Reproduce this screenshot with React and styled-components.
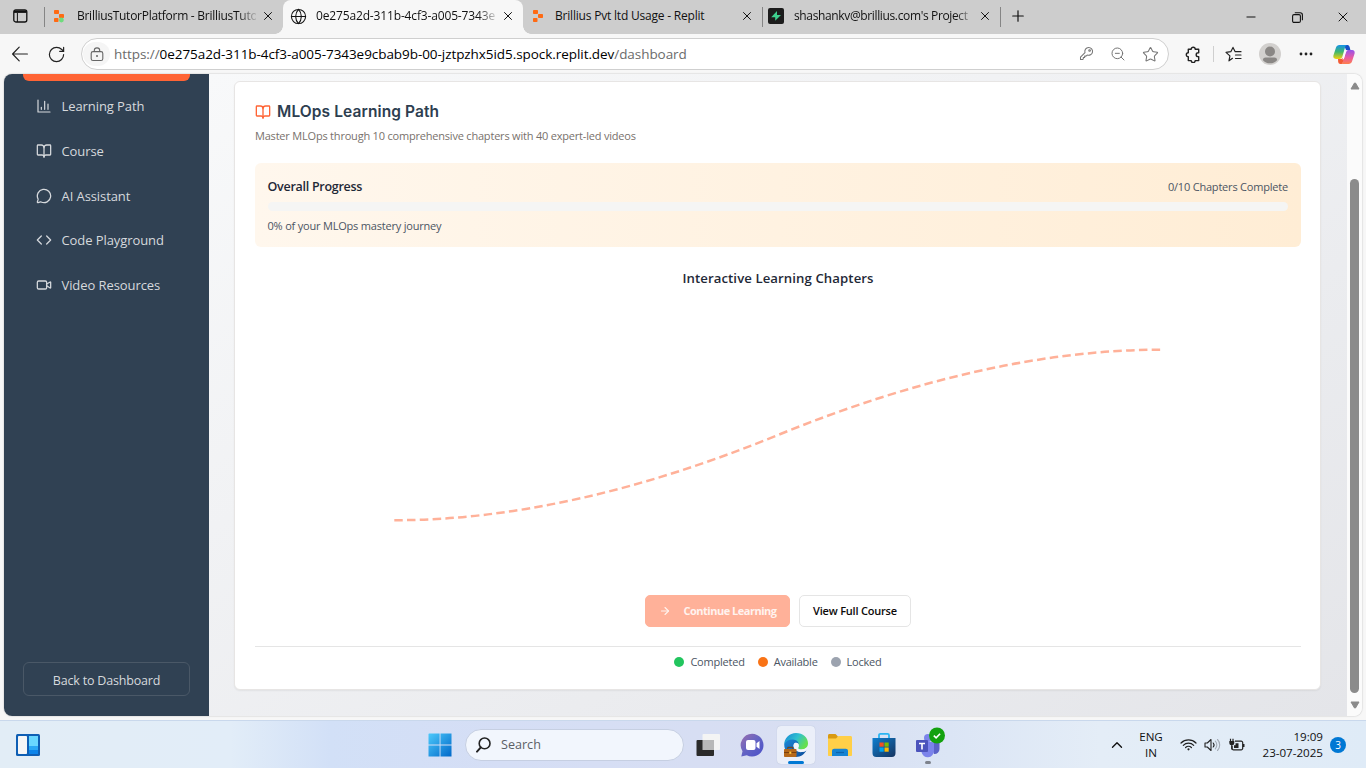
import React from 'react';
import styled, { createGlobalStyle } from 'styled-components';
import {
  BookOpen, MessageCircle, Code, Video, ArrowRight, Globe, Plus, X, Minus,
  RotateCw, ZoomOut, Star, ChevronUp,
} from 'lucide-react';

const Global = createGlobalStyle`
  * { box-sizing: border-box; }
  body { margin: 0; overflow: hidden; background: #f7f7f7; }
  svg { display: block; flex: none; }
`;

const ui = `'Open Sans', 'Noto Sans', sans-serif`;

const Screen = styled.div`
  width: 1366px;
  height: 768px;
  display: flex;
  flex-direction: column;
  background: #f7f7f7;
  font-family: ${ui};
  color: #111;
`;

const Text = styled.span`
  display: block;
  font-size: ${p => p.$size}px;
  font-weight: ${p => p.$weight || 400};
  color: ${p => p.$color || 'inherit'};
  letter-spacing: ${p => p.$track || 0}px;
  line-height: ${p => p.$line || 18}px;
  white-space: nowrap;
`;

/* ---- tab strip ---- */
const TabStrip = styled.header`
  height: 34px;
  flex: none;
  display: flex;
  background: #cdcdcd;
`;
const TabActions = styled.div`
  width: 44px;
  display: flex;
  align-items: center;
  padding: 0 0 2px 13px;
`;
const Tab = styled.div`
  position: relative;
  width: ${p => p.$width}px;
  height: 34px;
  display: flex;
  align-items: center;
  padding: 0 8px 2px ${p => p.$pad}px;
  background: ${p => (p.$active ? '#f7f7f7' : 'transparent')};
  border-radius: 8px 8px 0 0;
  ${p => p.$active && `
    &::before, &::after {
      content: '';
      position: absolute;
      bottom: 0;
      width: 8px;
      height: 8px;
    }
    &::before { left: -8px; background: radial-gradient(circle at 0 0, #cdcdcd 7.5px, #f7f7f7 8px); }
    &::after { right: -8px; background: radial-gradient(circle at 100% 0, #cdcdcd 7.5px, #f7f7f7 8px); }
  `}
`;
const TabTitle = styled.span`
  flex: 1;
  min-width: 0;
  margin-left: ${p => p.$gap}px;
  margin-right: 5px;
  overflow: hidden;
  white-space: nowrap;
  font-size: 12px;
  line-height: 18px;
  letter-spacing: ${p => p.$track}px;
  ${p => p.$fade && 'mask-image: linear-gradient(to right, #000 calc(100% - 18px), rgba(0, 0, 0, 0.15));'}
`;
const TabDivider = styled.i`
  width: 1px;
  height: 20px;
  margin: 7px -1px 0 0;
  background: #858585;
`;
const NewTab = styled.div`
  width: 36px;
  display: flex;
  align-items: center;
  justify-content: center;
  padding-bottom: 2px;
`;
const WindowButtons = styled.div`
  margin-left: auto;
  display: flex;
  align-items: center;
`;
const WindowButton = styled.div`
  width: 46px;
  display: flex;
  justify-content: center;
`;

/* ---- toolbar ---- */
const Toolbar = styled.div`
  height: 39px;
  flex: none;
  display: flex;
  align-items: center;
  padding: 1px 10px 0 11px;
`;
const Refresh = styled.div`
  margin: 0 15px 0 19px;
  color: #222;
`;
const AddressBar = styled.div`
  width: 1088px;
  height: 32px;
  display: flex;
  align-items: center;
  padding: 0 9px 0 1px;
  background: #fff;
  border: 1px solid #cfcfcf;
  border-radius: 16px;
`;
const LockBadge = styled.div`
  width: 27px;
  height: 24px;
  display: flex;
  align-items: center;
  justify-content: center;
  background: #f5f5f5;
  border-radius: 12px;
  margin-right: 4px;
`;
const Url = styled.div`
  flex: 1;
  font-size: 13.5px;
  letter-spacing: -0.06px;
  line-height: 20px;
  color: #6b6b6b;
  white-space: nowrap;
  b { font-weight: 400; color: #000; }
`;
const AddressIcons = styled.div`
  display: flex;
  gap: 16px;
  color: #757575;
`;
const ToolItem = styled.div`
  margin-left: ${p => p.$gap}px;
`;
const ToolbarDivider = styled.i`
  width: 1px;
  height: 16px;
  margin-left: 12px;
  background: #cfcfcf;
`;

/* ---- page ---- */
const Viewport = styled.div`
  height: 642px;
  flex: none;
  margin: 1px 4px 0 4px;
  display: flex;
  border-radius: 8px;
  overflow: hidden;
  background: #fbfbfb;
  box-shadow: 0 0 1.5px rgba(0, 0, 0, 0.35);
`;
const Sidebar = styled.aside`
  width: 205px;
  flex: none;
  display: flex;
  flex-direction: column;
  padding: 0 19px 20px;
  background: #304153;
  color: #d6d9dd;
`;
const ActiveItem = styled.div`
  height: 7px;
  flex: none;
  background: #ff6435;
  border-radius: 0 0 6px 6px;
  margin-bottom: 3px;
`;
const NavItem = styled.div`
  height: 44.65px;
  display: flex;
  align-items: center;
  gap: 9.5px;
  padding-left: 13px;
`;
const BackButton = styled.div`
  height: 34px;
  margin-top: auto;
  display: flex;
  align-items: center;
  justify-content: center;
  padding-top: 3px;
  border: 1px solid #4a5867;
  border-radius: 6px;
`;
const Main = styled.main`
  flex: 1;
  padding: 7px 26px 0 25px;
  background: linear-gradient(150deg, #f8f9fa 0%, #e4e5e9 100%);
`;
const Scrollbar = styled.div`
  width: 15px;
  display: flex;
  flex-direction: column;
  align-items: center;
  padding: 8px 0 7px;
  background: #fbfbfb;
`;
const Thumb = styled.div`
  width: 9px;
  height: 514px;
  margin-top: 89px;
  margin-bottom: auto;
  border-radius: 5px;
  background: #8b8b8b;
`;
const Card = styled.section`
  height: 609px;
  padding: 19px 19px 0 20px;
  background: #fff;
  border: 1px solid #e7e5e4;
  border-radius: 6px;
  box-shadow: 0 1px 2px rgba(0, 0, 0, 0.06);
`;
const CardTitle = styled.h1`
  height: 22px;
  margin: 0;
  display: flex;
  align-items: center;
  gap: 6px;
  font: 600 15.5px/22px Inter, sans-serif;
  letter-spacing: 0.1px;
  color: #2d3e50;
`;
const Subtitle = styled.div`
  margin: 4px 0 18px;
  height: 18px;
`;
const ProgressBox = styled.div`
  height: 84px;
  padding: 14.5px 13px 0 12.5px;
  border-radius: 6px;
  background: linear-gradient(to right, #fff7ed, #ffedd5);
`;
const ProgressHead = styled.div`
  display: flex;
  justify-content: space-between;
`;
const Track = styled.div`
  height: 9px;
  margin: 6.5px 0 6px;
  border-radius: 5px;
  background: #f5f5f4;
`;
const SectionTitle = styled.div`
  margin-top: 22px;
  height: 18px;
  display: flex;
  justify-content: center;
`;
const PathChart = styled.div`
  height: 308px;
  display: flex;
`;
const Actions = styled.div`
  display: flex;
  justify-content: center;
  gap: 9px;
`;
const Button = styled.div`
  width: ${p => p.$width}px;
  height: 32px;
  display: flex;
  align-items: center;
  justify-content: center;
  gap: 13px;
  border-radius: 5px;
  border: 1px solid ${p => (p.$primary ? '#ffb199' : '#e5e5e5')};
  background: ${p => (p.$primary ? '#ffb199' : '#fff')};
  color: ${p => (p.$primary ? '#fff3ef' : '#0c0a09')};
`;
const Legend = styled.div`
  margin-top: 19px;
  padding-top: 6px;
  border-top: 1px solid #e5e5e5;
  display: flex;
  justify-content: center;
  gap: 13px;
`;
const LegendItem = styled.div`
  display: flex;
  align-items: center;
  gap: 6px;
`;
const Dot = styled.i`
  width: 10px;
  height: 10px;
  border-radius: 50%;
  background: ${p => p.$color};
`;

/* ---- taskbar ---- */
const Taskbar = styled.footer`
  height: 48px;
  margin-top: auto;
  display: flex;
  align-items: center;
  border-top: 1px solid #c9d8ec;
  background: linear-gradient(to right, #e2edf6 0, #e2edf8 230px, #d2e0f7 330px, #d5def5 500px, #d8def2 800px, #dbe5f5 950px, #e4edf7 1100px, #dfebf7 1366px);
`;
const Widgets = styled.div`
  width: 428px;
  padding-left: 16px;
`;
const SearchBox = styled.div`
  width: 219px;
  height: 32px;
  margin: 0 5px 0 12.5px;
  display: flex;
  align-items: center;
  gap: 10px;
  padding-left: 10.5px;
  border: 1px solid #c6cfe2;
  border-radius: 16px;
  background: #f2f6fd;
`;
const TaskButton = styled.div`
  position: relative;
  width: 38px;
  height: 38px;
  margin-right: 6px;
  display: flex;
  align-items: center;
  justify-content: center;
  border-radius: 4px;
  background: ${p => (p.$active ? '#ebeff9' : 'transparent')};
  box-shadow: ${p => (p.$active ? '0 0 1px #a9b4cc' : 'none')};
`;
const RunningMark = styled.i`
  position: absolute;
  bottom: 0;
  left: ${p => 19 - p.$width / 2}px;
  width: ${p => p.$width}px;
  height: 3px;
  border-radius: 2px;
  background: ${p => p.$color};
`;
const Tray = styled.div`
  margin-left: auto;
  display: flex;
  align-items: center;
  padding-right: 20px;
`;
const Stack = styled.div`
  display: flex;
  flex-direction: column;
  align-items: ${p => p.$align};
  width: ${p => p.$width}px;
`;
const TrayIcons = styled.div`
  display: flex;
  align-items: center;
  gap: 7px;
  margin-left: 4px;
`;
const Badge = styled.div`
  width: 16px;
  height: 16px;
  margin-left: 7px;
  display: flex;
  align-items: center;
  justify-content: center;
  border-radius: 50%;
  background: #0078d4;
`;

const Close = () => <X size={14} strokeWidth={1.7} />;

const ReplitMark = ({ green }) => (
  <svg width="12" height="14" viewBox="0 0 12 14">
    <rect x="1" y="1" width="5" height="4" rx="0.8" fill="#ff6a13" />
    <rect x="6" y="5" width="5" height="4" rx="0.8" fill="#ff6a13" />
    <rect x="1" y="9" width="4.5" height="4" rx="0.8" fill="#ff6a13" />
    {green && <circle cx="8.4" cy="11" r="2.4" fill="#6edb7d" />}
  </svg>
);

const TabPane = () => (
  <svg width="15" height="14" viewBox="0 0 15 14" fill="none" stroke="#111" strokeWidth="1.3">
    <rect x="0.8" y="0.8" width="13" height="12.2" rx="2" />
    <path d="M1 2.6h12.6" strokeWidth="2.6" />
    <path d="M4.4 4v9" strokeWidth="1" />
  </svg>
);

const SupabaseMark = () => (
  <svg width="16" height="16" viewBox="0 0 16 16">
    <rect width="16" height="16" rx="2" fill="#1c1c1c" />
    <path d="M9 3v4h4L7.2 12.8V9.2H3.2z" fill="#3ecf8e" />
  </svg>
);

const Lock = () => (
  <svg width="14" height="15" viewBox="0 0 14 15" fill="none" stroke="#666" strokeWidth="1.1">
    <rect x="1.2" y="4.6" width="11.6" height="8.9" rx="1.8" />
    <path d="M4.3 4.6V3.6a2.7 2.7 0 0 1 5.4 0v1" />
    <circle cx="7" cy="9" r="1" fill="#666" stroke="none" />
  </svg>
);

const BackArrow = () => (
  <svg width="17" height="16" viewBox="0 0 17 16" fill="none" stroke="#222" strokeWidth="1.2" strokeLinecap="round" strokeLinejoin="round">
    <path d="M16.4 8H1.6M8.2 1.2 1.6 8l6.6 6.8" />
  </svg>
);

const Key = () => (
  <svg width="15" height="15" viewBox="0 0 16 16" fill="none" stroke="currentColor" strokeWidth="1.1" strokeLinejoin="round">
    <path d="M10.2 1.5a4.2 4.2 0 1 1-1.5 8.1l-1.2 1.2H6v1.5H4.6v1.4l-.8.8H1.6v-2.7l4.8-4.8a4.2 4.2 0 0 1 3.8-5.5z" />
    <circle cx="11.3" cy="4.8" r="0.9" />
  </svg>
);

const Extensions = () => (
  <svg width="16" height="17" viewBox="0 0 16 17" fill="none" stroke="#222" strokeWidth="1.4" strokeLinejoin="round">
    <path d="M3.3 3.2h2.9a2 2 0 0 1 4 0h3.5v3.6h-.6a1.9 1.9 0 0 0 0 3.8h.6v4H10.2a2 2 0 0 1-4 0H3.3v-3.8a2 2 0 0 1 0-4z" />
  </svg>
);

const FavoritesList = () => (
  <svg width="17" height="17" viewBox="0 0 17 17" fill="none" stroke="#222" strokeWidth="1.2" strokeLinejoin="round" strokeLinecap="round">
    <path d="M7.5 12.3 4 14.8l.9-4.9L1 6.4l4.8-.7L8 1.4l2.2 4.3H16M10.5 9H16M10.5 12.5H16" />
  </svg>
);

const Avatar = () => (
  <svg width="22" height="22" viewBox="0 0 22 22">
    <circle cx="11" cy="11" r="11" fill="#d2d0ce" />
    <circle cx="11" cy="8.5" r="5" fill="#8a8785" />
    <path d="M3.8 17a2.800 2.800 0 0 1 2.800-2.400h8.800a2.800 2.800 0 0 1 2.800 2.400 9.400 9.400 0 0 1-14.400 0z" fill="#8a8785" />
  </svg>
);

const Dots = () => (
  <svg width="14" height="4" viewBox="0 0 14 4" fill="#222">
    <circle cx="2" cy="2" r="1.4" /><circle cx="7" cy="2" r="1.4" /><circle cx="12" cy="2" r="1.4" />
  </svg>
);

const Copilot = () => (
  <svg width="22" height="21" viewBox="0 0 22 21">
    <defs>
      <linearGradient id="cpA" x1="0" y1="0" x2="0" y2="1">
        <stop offset="0" stopColor="#1593e8" /><stop offset=".5" stopColor="#40b76b" /><stop offset="1" stopColor="#f5d10c" />
      </linearGradient>
      <linearGradient id="cpB" x1="0" y1="0" x2="0" y2="1">
        <stop offset="0" stopColor="#9552ed" /><stop offset=".55" stopColor="#e95ba2" /><stop offset="1" stopColor="#ff7f4c" />
      </linearGradient>
    </defs>
    <path d="M11 1h3.6c1.2 0 1.7 1 2 2l.8 3H13z" fill="#1450c8" />
    <path d="M6.5 1H14c-1.2.4-1.7 1.5-2 2.6l-2.6 9C9 14 8 15 6.6 15H3C.8 15 0 13.4.4 11.6L3 3.4C3.5 2 4.7 1 6.5 1z" fill="url(#cpA)" />
    <path d="M5 15h3c1.5 0 2-1 2.4-2.4l.6 4L9 20H7.5c-1.5 0-2-1-2.3-2z" fill="#f25b35" />
    <path d="M15.5 20H8c1.2-.4 1.7-1.5 2-2.6l2.6-9C13 7 14 6 15.4 6H19c2.2 0 3 1.6 2.6 3.4L19 17.6c-.5 1.400-1.700 2.400-3.500 2.400z" fill="url(#cpB)" />
    <path d="M12.600 7.200h1.200c-.7.500-1 1.200-1.200 2l-1.400 4.800c-.3 1-.9 1.700-1.800 1.800l.9-3z" fill="#fff" />
  </svg>
);

const Chart = () => (
  <svg width="16" height="16" viewBox="0 0 24 24" fill="none" stroke="currentColor" strokeWidth="1.8" strokeLinecap="round" strokeLinejoin="round">
    <path d="M3 3v18h18M18 17V9M13 17V5M8 17v-3" />
  </svg>
);

const Restore = () => (
  <svg width="11" height="11" viewBox="0 0 11 11" fill="none" stroke="#111" strokeWidth="1.1">
    <rect x="0.6" y="2.6" width="7.8" height="7.8" rx="1.4" />
    <path d="M2.8.7h5.4a2.2 2.2 0 0 1 2.2 2.2v5.4" />
  </svg>
);

const ArrowTip = ({ down }) => (
  <svg width="10" height="8" viewBox="0 0 10 8">
    <path d={down ? 'M1 1h8L5.5 7h-1z' : 'M1 7h8L5.5 1h-1z'} fill="#8b8b8b" stroke="#8b8b8b" strokeLinejoin="round" />
  </svg>
);

const Curve = () => (
  <svg width="1046" height="308" viewBox="255 287 1046 308" fill="none">
    <path d="M394.3 520.2Q569 520.2 778 435T1161.7 349.7" stroke="#ffb199" strokeWidth="2.5" strokeDasharray="8.53 4.27" />
  </svg>
);

const WidgetsIcon = () => (
  <svg width="24" height="22" viewBox="0 0 24 22">
    <rect width="24" height="22" rx="1.5" fill="#0f5fb4" />
    <rect x="2" y="2" width="9" height="18" rx="0.8" fill="#f6f6f6" />
    <rect x="13" y="2" width="9" height="10" fill="#69d7ff" />
    <rect x="13" y="12" width="9" height="4" fill="#2aa8f5" />
    <rect x="13" y="16" width="9" height="4" fill="#0c84ea" />
  </svg>
);

const StartIcon = () => (
  <svg width="24" height="24" viewBox="0 0 24 24">
    <defs>
      <linearGradient id="win" x1="0" y1="0" x2="1" y2="1">
        <stop offset="0" stopColor="#4cc9fb" /><stop offset="1" stopColor="#0068c9" />
      </linearGradient>
    </defs>
    <path d="M1 .5h10.600v11H.5V1zM12.500.5h11v11h-11zM.5 12.500h11.100v11H.5zM12.500 12.500h11v11h-11z" fill="url(#win)" />
  </svg>
);

const SearchIcon = () => (
  <svg width="15" height="16" viewBox="0 0 15 16" fill="none" stroke="#222" strokeWidth="1.6" strokeLinecap="round">
    <circle cx="8.6" cy="6.4" r="5.4" /><path d="M4.8 10.4 1 14.6" strokeWidth="2" />
  </svg>
);

const TaskView = () => (
  <svg width="24" height="24" viewBox="0 0 24 24">
    <rect x="6.5" y="1" width="17.5" height="16" rx="1" fill="#f4f4f4" />
    <rect x="0.5" y="7" width="17.5" height="16" rx="1" fill="#2a2a2a" />
    <rect x="6.5" y="7" width="11.5" height="10" fill="#b8b8b8" />
  </svg>
);

const ChatIcon = () => (
  <svg width="24" height="24" viewBox="0 0 24 24">
    <defs>
      <linearGradient id="chat" x1="0" y1="0" x2="1" y2="1">
        <stop offset="0" stopColor="#9b6fae" /><stop offset=".5" stopColor="#6263c4" /><stop offset="1" stopColor="#4a4fc9" />
      </linearGradient>
    </defs>
    <path d="M12 .8A11.400 11.400 0 1 1 6.800 22.300L1.300 23.500l1.200-5.200A11.400 11.400 0 0 1 12 .8z" fill="url(#chat)" />
    <rect x="6" y="7" width="9.5" height="10" rx="2" fill="#fff" />
    <path d="m16.500 10.300 3-2.300v8l-3-2.300z" fill="#fff" />
  </svg>
);

const EdgeIcon = () => (
  <svg width="26" height="26" viewBox="0 0 26 26">
    <defs>
      <linearGradient id="edgeTop" x1="0" y1="0" x2="1" y2=".5">
        <stop offset="0" stopColor="#1685d6" /><stop offset=".55" stopColor="#2fc1cf" /><stop offset="1" stopColor="#66e04e" />
      </linearGradient>
      <linearGradient id="edgeLow" x1="0" y1="0" x2="1" y2="1">
        <stop offset="0" stopColor="#1b87d8" /><stop offset="1" stopColor="#0c4c9a" />
      </linearGradient>
    </defs>
    <path d="M1.200 13C1 6 6.500 1 13 1c7 0 12 4.800 12 10.300 0 4-3 6.200-6.500 6.200-2.600 0-4-.9-3.500-1.800 2-3 0-6.700-3.900-6.700-5 0-9 2-9.900 4z" fill="url(#edgeTop)" />
    <path d="M1.200 12.500C2.500 9.200 6 7.300 10 7.500c3.300.2 5.800 2.400 6 5.200-.5-1.200-1.700-1.900-3-1.900-2 0-3 2-2.300 4.300.9 3.200 4.300 5.300 8 5 2.200-.2 3.800-.9 4.700-1.500-2 3.800-5.900 6.400-10.200 6.400-6.700 0-12-5.600-12-12.500z" fill="url(#edgeLow)" />
    <path d="M15.800 14.200c0 .6-.3 1-.5 1.500-.5.900.9 1.800 3.500 1.800 2 0 3.800-.7 5-2-.3 1.500-1 2.800-1.700 3.700-5 1.700-10.400-.8-11.300-4.200-.6-2.200.5-4.200 2.200-4.200 1.600 0 2.800 1.500 2.800 3.400z" fill="#f1f5fb" />
    <rect x="1" y="17" width="12.5" height="8" rx="0.8" fill="#b4671a" />
    <path d="M4.800 17v-1.700h5V17" fill="none" stroke="#7a3f0c" strokeWidth="1" />
    <path d="M1 20.500h12.500" stroke="#7a3f0c" /><rect x="6.3" y="19.6" width="2" height="2.2" fill="#ffc93c" />
  </svg>
);

const FolderIcon = () => (
  <svg width="26" height="24" viewBox="0 0 26 24">
    <path d="M1 2.500C1 1.600 1.600 1 2.500 1h6l2.500 2.600V8H1z" fill="#d99a12" />
    <path d="M1 5.500h8L11.500 3h12c.9 0 1.500.6 1.500 1.500V22c0 .6-.4 1-1 1H2c-.6 0-1-.4-1-1z" fill="#ffcf48" />
    <path d="M5 23v-5c0-1.300.9-2.200 2.200-2.200h11.600c1.300 0 2.200.9 2.200 2.200v5z" fill="#1583d3" />
    <path d="M9 19.500h8" stroke="#0c62aa" strokeWidth="1.2" />
  </svg>
);

const StoreIcon = () => (
  <svg width="24" height="26" viewBox="0 0 24 26">
    <defs>
      <linearGradient id="store" x1="0" y1="0" x2="1" y2="1">
        <stop offset="0" stopColor="#0f7fd0" /><stop offset="1" stopColor="#16335f" />
      </linearGradient>
    </defs>
    <path d="M7 7V3.200C7 2.200 7.500 1.800 8.400 1.800h7.200c.9 0 1.400.4 1.400 1.400V7" fill="none" stroke="#2bb5f2" strokeWidth="1.8" />
    <path d="M.5 6h23v15c0 2.500-1.200 4-3.700 4H4.200C1.700 25 .5 23.500.5 21z" fill="url(#store)" />
    <rect x="7.5" y="10.5" width="4.2" height="4.2" fill="#f25022" />
    <rect x="12.5" y="10.5" width="4.2" height="4.2" fill="#7fba00" />
    <rect x="7.5" y="15.5" width="4.2" height="4.2" fill="#00a4ef" />
    <rect x="12.5" y="15.5" width="4.2" height="4.2" fill="#ffb900" />
  </svg>
);

const TeamsIcon = () => (
  <svg width="36" height="36" viewBox="0 0 36 36">
    <circle cx="18" cy="11" r="4" fill="#7b83eb" />
    <path d="M20 15h9.500v7a5 5 0 0 1-5.500 5z" fill="#5b62c8" />
    <path d="M11.500 15H24v9a6.300 6.300 0 0 1-12.500 1z" fill="#7b83eb" />
    <rect x="6" y="13" width="12" height="12" rx="1" fill="#4b53bc" />
    <path d="M9 16.500h6M12 16.500v6" stroke="#fff" strokeWidth="1.6" />
    <circle cx="27" cy="8.5" r="8" fill="#13a10e" />
    <path d="m23.800 8.700 2.300 2.200 4-4.200" fill="none" stroke="#fff" strokeWidth="1.6" />
  </svg>
);

const Wifi = () => (
  <svg width="17" height="13" viewBox="0 0 17 13" fill="none" stroke="#222" strokeWidth="1.2" strokeLinecap="round">
    <path d="M1 5a10.500 10.500 0 0 1 15 0M3.300 7.300a7.300 7.300 0 0 1 10.400 0M5.600 9.500a4.200 4.200 0 0 1 5.800 0" />
    <circle cx="8.5" cy="11.3" r="1.1" fill="#222" stroke="none" />
  </svg>
);

const Speaker = () => (
  <svg width="17" height="14" viewBox="0 0 17 14" fill="none" stroke="#222" strokeWidth="1.1" strokeLinejoin="round" strokeLinecap="round">
    <path d="M1 5v4h2.300L7 12.500v-11L3.300 5zM9.200 5a3 3 0 0 1 0 4" />
    <path d="M11.300 3.200a5.500 5.500 0 0 1 0 7.600M13.500 1.500a8 8 0 0 1 0 11" stroke="#a4abb5" />
  </svg>
);

const Battery = () => (
  <svg width="17" height="14" viewBox="0 0 17 14" fill="none" stroke="#222" strokeWidth="1.2">
    <path d="M7 3.200h6.200a1.500 1.500 0 0 1 1.500 1.500v5.600a1.500 1.500 0 0 1-1.500 1.500H5.500A1.500 1.500 0 0 1 4 10.300V8" />
    <path d="M15.700 6v3" strokeWidth="1.6" />
    <path d="M6 7.300h1.500v-2h3v4.600H6z" fill="#222" stroke="none" />
    <path d="M1.300 3h5v1.800a2.500 2.500 0 0 1-5 0z" fill="#222" stroke="none" />
    <path d="M2.500.8V3M5 .8V3M3.800 7v4.500" />
  </svg>
);

const nav = [
  { label: 'Learning Path', icon: <Chart /> },
  { label: 'Course', icon: <BookOpen size={16} strokeWidth={1.9} /> },
  { label: 'AI Assistant', icon: <MessageCircle size={16} strokeWidth={1.9} /> },
  { label: 'Code Playground', icon: <Code size={16} strokeWidth={1.9} /> },
  { label: 'Video Resources', icon: <Video size={16} strokeWidth={1.9} /> },
];

const legend = [
  { label: 'Completed', color: '#22c55e' },
  { label: 'Available', color: '#f97316' },
  { label: 'Locked', color: '#9ca3af' },
];

export default function App() {
  return (
    <Screen>
      <Global />
      <TabStrip>
        <TabActions><TabPane /></TabActions>
        <TabDivider />
        <Tab $width={239} $pad={9}>
          <ReplitMark green />
          <TabTitle $gap={12} $track={-0.27} $fade>BrilliusTutorPlatform - BrilliusTuto</TabTitle>
          <Close />
        </Tab>
        <Tab $width={240} $pad={7} $active>
          <Globe size={17} strokeWidth={1.5} />
          <TabTitle $gap={9} $track={-0.15} $fade>0e275a2d-311b-4cf3-a005-7343e</TabTitle>
          <Close />
        </Tab>
        <Tab $width={239} $pad={9}>
          <ReplitMark />
          <TabTitle $gap={11} $track={-0.2}>Brillius Pvt ltd Usage - Replit</TabTitle>
          <Close />
        </Tab>
        <TabDivider />
        <Tab $width={238} $pad={6}>
          <SupabaseMark />
          <TabTitle $gap={10} $track={-0.36} $fade>shashankv@brillius.com's Project</TabTitle>
          <Close />
        </Tab>
        <TabDivider />
        <NewTab><Plus size={18} strokeWidth={1.6} /></NewTab>
        <WindowButtons>
          <WindowButton><Minus size={14} strokeWidth={1.7} /></WindowButton>
          <WindowButton><Restore /></WindowButton>
          <WindowButton><X size={16} strokeWidth={1.5} /></WindowButton>
        </WindowButtons>
      </TabStrip>

      <Toolbar>
        <BackArrow />
        <Refresh><RotateCw size={19} strokeWidth={1.5} /></Refresh>
        <AddressBar>
          <LockBadge><Lock /></LockBadge>
          <Url>https://<b>0e275a2d-311b-4cf3-a005-7343e9cbab9b-00-jztpzhx5id5.spock.replit.dev</b>/dashboard</Url>
          <AddressIcons>
            <Key />
            <ZoomOut size={16} strokeWidth={1.5} />
            <Star size={17} strokeWidth={1.5} />
          </AddressIcons>
        </AddressBar>
        <ToolItem $gap={16}><Extensions /></ToolItem>
        <ToolbarDivider />
        <ToolItem $gap={11}><FavoritesList /></ToolItem>
        <ToolItem $gap={17}><Avatar /></ToolItem>
        <ToolItem $gap={18}><Dots /></ToolItem>
        <ToolItem $gap={20}><Copilot /></ToolItem>
      </Toolbar>

      <Viewport>
        <Sidebar>
          <ActiveItem />
          {nav.map(n => (
            <NavItem key={n.label}>
              {n.icon}
              <Text $size={13} $track={-0.08}>{n.label}</Text>
            </NavItem>
          ))}
          <BackButton><Text $size={12.5} $track={-0.18}>Back to Dashboard</Text></BackButton>
        </Sidebar>
        <Main>
          <Card>
            <CardTitle><BookOpen size={16} strokeWidth={2} color="#ff6435" />MLOps Learning Path</CardTitle>
            <Subtitle><Text $size={11} $track={-0.2} $color="#78716c">Master MLOps through 10 comprehensive chapters with 40 expert-led videos</Text></Subtitle>
            <ProgressBox>
              <ProgressHead>
                <Text $size={12.5} $weight={600} $color="#1f2937" $track={-0.27}>Overall Progress</Text>
                <Text $size={11} $track={-0.2} $color="#4b5563">0/10 Chapters Complete</Text>
              </ProgressHead>
              <Track />
              <Text $size={11} $track={-0.2} $color="#4b5563">0% of your MLOps mastery journey</Text>
            </ProgressBox>
            <SectionTitle><Text $size={13.2} $weight={600} $track={0.08} $color="#1f2937">Interactive Learning Chapters</Text></SectionTitle>
            <PathChart><Curve /></PathChart>
            <Actions>
              <Button $width={145} $primary>
                <ArrowRight size={12} strokeWidth={2.2} />
                <Text $size={11} $weight={700} $track={-0.5}>Continue Learning</Text>
              </Button>
              <Button $width={112}><Text $size={11} $weight={600} $track={-0.2}>View Full Course</Text></Button>
            </Actions>
            <Legend>
              {legend.map(l => (
                <LegendItem key={l.label}>
                  <Dot $color={l.color} />
                  <Text $size={11} $track={-0.22} $color="#4b5563">{l.label}</Text>
                </LegendItem>
              ))}
            </Legend>
          </Card>
        </Main>
        <Scrollbar>
          <ArrowTip />
          <Thumb />
          <ArrowTip down />
        </Scrollbar>
      </Viewport>

      <Taskbar>
        <Widgets><WidgetsIcon /></Widgets>
        <StartIcon />
        <SearchBox><SearchIcon /><Text $size={12.6} $color="#5b5f66">Search</Text></SearchBox>
        <TaskButton><TaskView /></TaskButton>
        <TaskButton><ChatIcon /></TaskButton>
        <TaskButton $active><EdgeIcon /><RunningMark $width={16} $color="#0078d4" /></TaskButton>
        <TaskButton><FolderIcon /></TaskButton>
        <TaskButton><StoreIcon /></TaskButton>
        <TaskButton><TeamsIcon /><RunningMark $width={6} $color="#7d828c" /></TaskButton>
        <Tray>
          <ChevronUp size={18} strokeWidth={1.8} />
          <Stack $align="center" $width={50}>
            <Text $size={11.6} $line={16}>ENG</Text>
            <Text $size={11.6} $line={16}>IN</Text>
          </Stack>
          <TrayIcons><Wifi /><Speaker /><Battery /></TrayIcons>
          <Stack $align="flex-end" $width={78}>
            <Text $size={11.6} $line={16}>19:09</Text>
            <Text $size={11.6} $line={16}>23-07-2025</Text>
          </Stack>
          <Badge><Text $size={10} $color="#fff" $line={14}>3</Text></Badge>
        </Tray>
      </Taskbar>
    </Screen>
  );
}
